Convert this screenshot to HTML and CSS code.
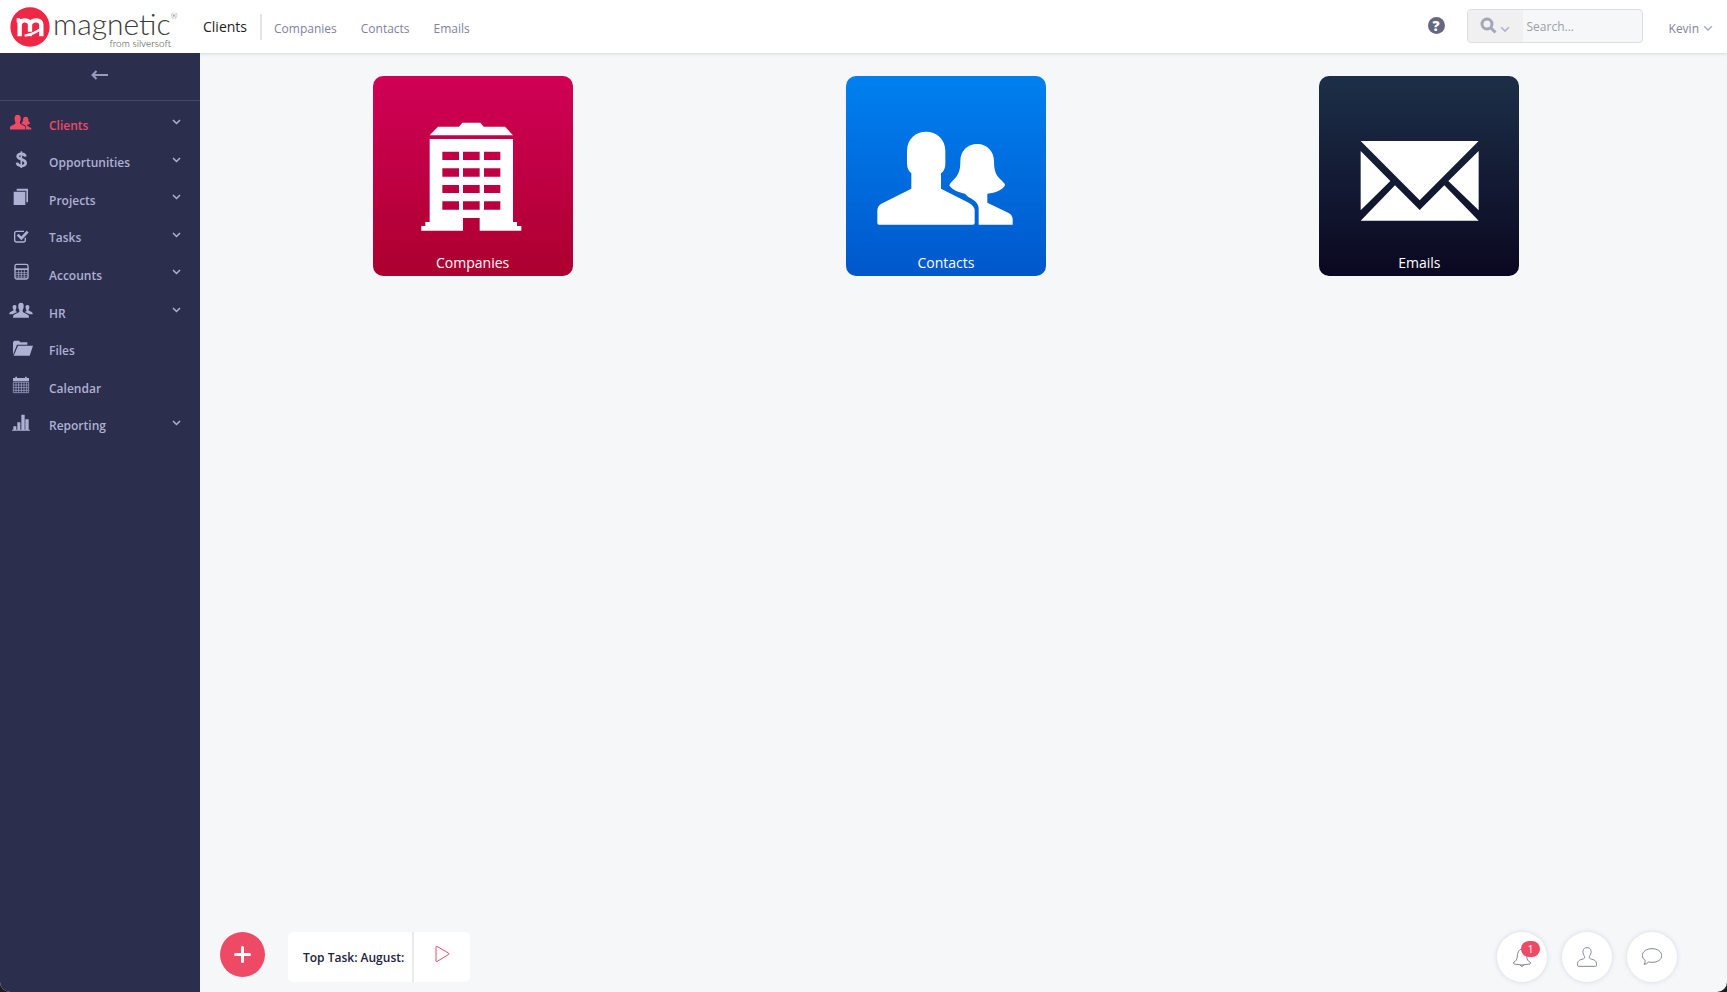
FILE: index.html
```html
<!DOCTYPE html>
<html lang="en">
<head>
  <meta charset="UTF-8">
  <meta name="viewport" content="width=device-width, initial-scale=1.0">
  <title>Clients</title>
  <link rel="stylesheet" href="styles.css">
</head>
<body>
  <svg class="defs" aria-hidden="true">
    <defs>
      <g id="people">
        <path d="M240 167C270 167 298 187 298 225V262C298 278 293 287 285 292V338L368 380Q386 390 386 404V441Q386 446 381 446H99Q94 446 94 441V404Q94 390 106 383L196 338V292C188 286 183 276 183 262V225C183 187 210 167 240 167Z"/>
        <path d="M394 204C425 204 444 228 444 255C444 285 450 297 462 309C470 317 477 322 477 328C470 342 448 351 424 353V380L488 411Q500 418 500 430V446H398V398C398 378 380 370 366 362Q360 356 357 353C340 351 316 340 310 328C312 322 318 316 325 309C337 296 343 285 343 255C343 225 364 204 394 204Z"/>
      </g>
      <path id="chevron" d="M1 1L4.500 4.500L8 1"/>
    </defs>
  </svg>

  <div class="app">
    <header class="topbar">
      <a class="logo" href="#">
        <svg class="logo-mark" viewBox="0 0 120 120" aria-hidden="true">
          <circle cx="60" cy="60" r="59"/>
          <path class="logo-m" d="M20 40H30M29 88V36M29 54Q30 40 44 40Q60 40 60 54V74M60 54Q62 40 78 40Q94 40 94 54V88"/>
          <path class="logo-swoosh" d="M44 86Q70 82 92 66M62 78V88"/>
        </svg>
        <span class="logo-text">
          <span class="logo-name">magnetic<sup>®</sup></span>
          <span class="logo-sub">from silversoft</span>
        </span>
      </a>
      <h1>Clients</h1>
      <nav class="subnav">
        <a href="#">Companies</a>
        <a href="#">Contacts</a>
        <a href="#">Emails</a>
      </nav>
      <div class="tools">
        <button class="help" type="button" aria-label="Help">?</button>
        <form class="search">
          <button type="button" aria-label="Search in">
            <svg width="17" height="17" viewBox="0 0 17 17"><circle cx="7" cy="7" r="5"/><path d="M10.500 10.500L15.500 15.500"/></svg>
            <svg class="chev" width="10" height="7" viewBox="0 0 9 6"><use href="#chevron"/></svg>
          </button>
          <input type="text" aria-label="Search" placeholder="Search...">
        </form>
        <button class="user" type="button">Kevin
          <svg class="chev" width="10" height="7" viewBox="0 0 9 6"><use href="#chevron"/></svg>
        </button>
      </div>
    </header>

    <aside class="sidebar">
      <button class="collapse" type="button" aria-label="Collapse menu">
        <svg width="18" height="10" viewBox="0 0 18 10"><path d="M17 5H2M5.500 1L1.500 5L5.500 9"/></svg>
      </button>
      <nav class="menu">
        <a class="active" href="#">
          <svg class="icon" viewBox="0 0 72 60"><use href="#people" transform="translate(-12 -18) scale(.158)"/></svg>
          <span>Clients</span>
          <svg class="chev" width="9" height="6" viewBox="0 0 9 6"><use href="#chevron"/></svg>
        </a>
        <a href="#">
          <svg class="icon" viewBox="0 0 72 60"><path class="line" stroke-width="8" d="M49 20C48 9 26 9 26 19C26 30 50 26 50 39C50 51 26 51 24 38"/><path class="line" stroke-width="5" d="M37 4V54"/></svg>
          <span>Opportunities</span>
          <svg class="chev" width="9" height="6" viewBox="0 0 9 6"><use href="#chevron"/></svg>
        </a>
        <a href="#">
          <svg class="icon" viewBox="0 0 72 60"><path d="M14 14H49V54H14ZM23 5H57V46H52V11H23Z"/></svg>
          <span>Projects</span>
          <svg class="chev" width="9" height="6" viewBox="0 0 9 6"><use href="#chevron"/></svg>
        </a>
        <a href="#">
          <svg class="icon" viewBox="0 0 72 60"><path class="line" stroke-width="4" d="M45 19H23Q17 19 17 25V45Q17 51 23 51H43Q49 51 49 45V38"/><path class="line" stroke-width="8" d="M26 29L37 40L56 20"/></svg>
          <span>Tasks</span>
          <svg class="chev" width="9" height="6" viewBox="0 0 9 6"><use href="#chevron"/></svg>
        </a>
        <a href="#">
          <svg class="icon" viewBox="0 0 72 60"><rect class="line" stroke-width="4" x="18" y="7" width="39" height="44" rx="5"/><path d="M17 19H58V24H17Z"/><path class="line" stroke-width="2" d="M20 32H55M20 38H55M20 45H55M29 24V50M37 24V50M46 24V50"/></svg>
          <span>Accounts</span>
          <svg class="chev" width="9" height="6" viewBox="0 0 9 6"><use href="#chevron"/></svg>
        </a>
        <a href="#">
          <svg class="icon" viewBox="0 0 72 60"><path d="M36 8C43 8 45 13 44 20C44 25 42 27 41 29V36L57 44Q60 46 60 53H12Q12 46 15 44L31 36V29C29 27 28 25 28 20C27 13 29 8 36 8Z"/><path d="M17 15C22 15 23 19 22 24L20 30V34L25 36L10 43H1Q0 38 4 36L14 31L11 24C10 19 12 15 17 15ZM55 15C60 15 62 19 61 24L58 31L68 36Q72 38 71 43H62L47 36L52 34V30L50 24C49 19 50 15 55 15Z"/></svg>
          <span>HR</span>
          <svg class="chev" width="9" height="6" viewBox="0 0 9 6"><use href="#chevron"/></svg>
        </a>
        <a href="#">
          <svg class="icon" viewBox="0 0 72 60"><path d="M12 50V13L16 8H30L34 13H55V20H24Z"/><path d="M27 23H72L62 53H14Z"/></svg>
          <span>Files</span>
        </a>
        <a href="#">
          <svg class="icon" viewBox="0 0 72 60"><path d="M12 9H19V5H24V9H48V5H53V9H60V19H12Z"/><path class="line" stroke-width="2" d="M13 22H59V53H13ZM13 30H59M13 38H59M13 46H59M21 22V53M29 22V53M37 22V53M45 22V53M53 22V53"/></svg>
          <span>Calendar</span>
        </a>
        <a href="#">
          <svg class="icon" viewBox="0 0 72 60"><path d="M9 50H63V53H9ZM13 40H22V50H13ZM25 28H34V50H25ZM37 5H47V50H37ZM49 19H59V50H49Z"/></svg>
          <span>Reporting</span>
          <svg class="chev" width="9" height="6" viewBox="0 0 9 6"><use href="#chevron"/></svg>
        </a>
      </nav>
    </aside>

    <main class="content">
      <div class="tiles">
        <a class="tile companies" href="#">
          <svg viewBox="0 0 600 480" aria-hidden="true">
            <path d="M170 178L195 152H258L268 140H322L332 152H396L420 178Z"/>
            <path fill-rule="evenodd" d="M170 189H420V438H432V450H445V464H320V426H270V464H145V450H157V438H170ZM208 227V252H258V227ZM270 227V252H320V227ZM333 227V252H382V227ZM208 277V302H258V277ZM270 277V302H320V277ZM333 277V302H382V277ZM208 327V351H258V327ZM270 327V351H320V327ZM333 327V351H382V327ZM208 376V401H258V376ZM270 376V401H320V376ZM333 376V401H382V376Z"/>
          </svg>
          <span>Companies</span>
        </a>
        <a class="tile contacts" href="#">
          <svg viewBox="0 0 600 480" aria-hidden="true"><use href="#people"/></svg>
          <span>Contacts</span>
        </a>
        <a class="tile emails" href="#">
          <svg viewBox="0 0 600 480" aria-hidden="true">
            <path d="M125 195H479L302 373ZM125 225L214 315L125 403ZM479 225L388 315L479 403ZM125 434L228 328L302 402L376 328L479 434Z"/>
          </svg>
          <span>Emails</span>
        </a>
      </div>

      <footer class="dock">
        <button class="add" type="button" aria-label="Add">
          <svg width="17" height="17" viewBox="0 0 17 17"><path d="M8.500 1.500V15.500M1.500 8.500H15.500"/></svg>
        </button>
        <div class="task">
          <span>Top Task: August:</span>
          <button type="button" aria-label="Start task">
            <svg width="15" height="18" viewBox="0 0 15 18"><path d="M1 2Q1 1 2 1.500L13.500 8Q14.500 9 13.500 9.500L2 16.500Q1 17 1 16Z"/></svg>
          </button>
        </div>
        <div class="round-buttons">
          <button type="button" aria-label="Notifications">
            <svg width="20" height="20" viewBox="0 0 60 60"><path d="M30 5C20 8 17 15 16 27C15 38 12 42 5 46Q2 49 6 51Q30 57 54 51Q58 49 55 46C47 42 45 38 44 27C43 15 40 8 30 5ZM24 54Q30 63 36 54"/></svg>
            <span class="badge">1</span>
          </button>
          <button type="button" aria-label="Profile">
            <svg width="20" height="20" viewBox="0 0 60 60"><path d="M30 2C40 2 43 9 42 17C41 24 37 27 37 31C37 35 41 36 49 38C56 40 59 46 59 55Q59 58 55 58H5Q1 58 1 55C1 46 4 40 11 38C19 36 23 35 23 31C23 27 19 24 18 17C17 9 20 2 30 2Z"/></svg>
          </button>
          <button type="button" aria-label="Chat">
            <svg width="20" height="20" viewBox="0 0 60 60"><path d="M30 5C47 5 59 14 59 26C59 38 47 46 30 46Q25 46 20 45Q15 51 6 52Q10 47 9 40Q1 34 1 26C1 14 13 5 30 5Z"/></svg>
          </button>
        </div>
      </footer>
    </main>
  </div>
</body>
</html>
```

FILE: styles.css
```css
* {
  box-sizing: border-box;
}
body {
  margin: 0;
  background: #1c1c1c;
  font-family: "Open Sans", sans-serif;
  font-size: 12px;
  color: #7f829c;
}
a {
  color: inherit;
  text-decoration: none;
}
button, input {
  font: inherit;
  color: inherit;
  border: 0;
  padding: 0;
  background: none;
}
button {
  cursor: pointer;
}
svg {
  display: block;
  flex: none;
}
.defs {
  position: absolute;
  width: 0;
  height: 0;
}
.chev {
  fill: none;
  stroke: #aeb1d3;
  stroke-width: 1.5;
}

.app {
  display: grid;
  grid-template: 53px 1fr / 200px 1fr;
  min-height: 100vh;
  background: #f5f7f9;
  border-radius: 0 0 10px 10px;
  overflow: hidden;
}

/* top bar */
.topbar {
  grid-column: 1 / 3;
  display: flex;
  align-items: center;
  padding: 0 14px 0 10px;
  background: #fff;
  box-shadow: 0 1px 3px rgba(40, 50, 80, 0.16);
}
.logo {
  display: flex;
  align-items: center;
  gap: 3px;
  width: 193px;
  height: 50px;
}
.logo-mark {
  width: 40px;
  height: 40px;
  fill: #ee2746;
}
.logo-m {
  fill: none;
  stroke: #fff;
  stroke-width: 13;
}
.logo-swoosh {
  fill: none;
  stroke: #fff;
  stroke-width: 7;
}
.logo-text {
  display: flex;
  flex-direction: column;
  width: 126px;
  font-family: Lato, sans-serif;
  font-weight: 300;
  color: #3c3c3c;
}
.logo-name {
  font-size: 30px;
  line-height: 32px;
  white-space: nowrap;
}
.logo-name sup {
  font-size: 8px;
  line-height: 0;
  vertical-align: 16px;
}
.logo-sub {
  padding-right: 8px;
  font-size: 10px;
  line-height: 8px;
  text-align: right;
}
h1 {
  margin: 0 13px 0 0;
  font-size: 14px;
  font-weight: 400;
  color: #1d1d22;
}
.subnav {
  display: flex;
  align-items: center;
  gap: 24px;
  height: 26px;
  padding: 4px 0 0 12px;
  border-left: 2px solid #dfe4e9;
}
.tools {
  display: flex;
  align-items: center;
  margin-left: auto;
}
.help {
  width: 17px;
  height: 17px;
  margin: 0 22px 2px 0;
  border-radius: 50%;
  background: #656882;
  color: #fff;
  font-size: 14px;
  font-weight: 800;
  line-height: 17px;
}
.search {
  display: flex;
  width: 176px;
  height: 34px;
  margin: 0 26px 2px 0;
  border: 1px solid #dcdde9;
  border-radius: 4px;
  background: #f5f7f9;
  overflow: hidden;
}
.search button {
  display: flex;
  align-items: center;
  justify-content: center;
  gap: 3px;
  width: 55px;
  background: #f0f0f0;
  fill: none;
  stroke: #a3a5b8;
  stroke-width: 3;
}
.search .chev {
  margin-top: 8px;
}
.search input {
  flex: 1;
  min-width: 0;
  padding: 2px 0 0 4px;
  outline: 0;
}
.search input::placeholder {
  color: #9c9ea6;
}
.user {
  display: flex;
  align-items: center;
  gap: 4px;
  padding-top: 4px;
}

/* sidebar */
.sidebar {
  background: #2b2e4d;
  color: #aeb1d3;
}
.collapse {
  display: flex;
  align-items: center;
  justify-content: center;
  width: 100%;
  height: 48px;
  padding-bottom: 4px;
  border-bottom: 1px solid #444766;
}
.collapse svg {
  fill: none;
  stroke: #989bc4;
  stroke-width: 2;
}
.menu {
  display: grid;
  grid-auto-rows: 1fr;
  min-height: 338px;
  margin-top: 5px;
  font-weight: 600;
}
.menu a {
  display: flex;
  align-items: center;
  padding: 0 19px 0 9px;
}
.menu span {
  flex: 1;
  margin-left: 16px;
  padding-top: 1px;
}
.menu svg {
  margin-bottom: 5px;
}
.icon {
  width: 24px;
  height: 20px;
  fill: currentColor;
}
.icon .line {
  fill: none;
  stroke: currentColor;
}
.menu .active {
  color: #ee4a66;
}

/* content */
.content {
  display: flex;
  flex-direction: column;
  justify-content: space-between;
}
.tiles {
  display: grid;
  grid-template-columns: repeat(3, 1fr);
  justify-items: center;
  padding: 23px 71px 20px 36px;
}
.tile {
  display: flex;
  flex-direction: column;
  justify-content: space-between;
  width: 200px;
  height: 200px;
  padding-bottom: 3px;
  border-radius: 10px;
  color: #fff;
  fill: #fff;
  font-size: 14px;
  line-height: 20px;
  text-align: center;
}
.companies {
  background: linear-gradient(#d10056, #ac002f);
}
.contacts {
  background: linear-gradient(#0080f0, #0058cb);
}
.emails {
  background: linear-gradient(#1d2f48, #0a0820);
}

/* bottom dock */
.dock {
  display: flex;
  align-items: flex-start;
  padding: 0 50px 10px 20px;
}
.add {
  display: flex;
  align-items: center;
  justify-content: center;
  width: 45px;
  height: 45px;
  border-radius: 50%;
  background: #ee4a66;
}
.add svg {
  fill: none;
  stroke: #fff;
  stroke-width: 3;
  stroke-linecap: round;
}
.task {
  display: flex;
  align-items: center;
  height: 50px;
  margin-left: 23px;
  padding-left: 15px;
  border-radius: 5px;
  background: #fff;
  color: #20223a;
  font-weight: 600;
}
.task span {
  padding-right: 8px;
}
.task button {
  display: flex;
  align-items: center;
  justify-content: center;
  width: 58px;
  height: 50px;
  padding-bottom: 6px;
  border-left: 2px solid #e9eaef;
  fill: none;
  stroke: #ee4a66;
}
.round-buttons {
  display: flex;
  gap: 15px;
  margin-left: auto;
}
.round-buttons button {
  position: relative;
  display: flex;
  align-items: center;
  justify-content: center;
  width: 50px;
  height: 50px;
  border-radius: 50%;
  background: #fff;
  box-shadow: 0 0 5px rgba(60, 90, 120, 0.18);
  fill: none;
  stroke: #82859c;
  stroke-width: 3;
}
.badge {
  position: absolute;
  top: 9px;
  right: 7px;
  width: 19px;
  height: 16px;
  border-radius: 8px;
  background: #ee4a66;
  color: #fff;
  font-size: 10px;
  line-height: 16px;
}
```
